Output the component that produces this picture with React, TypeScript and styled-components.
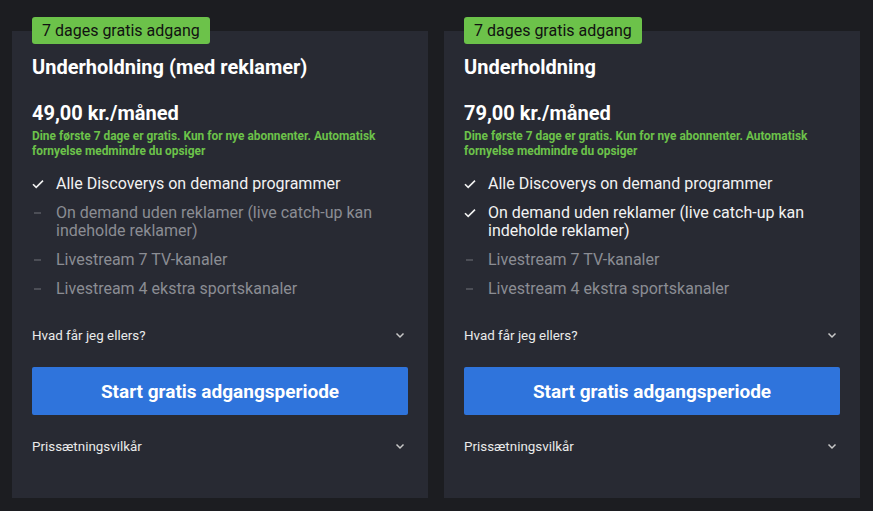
import React from 'react';
import styled, { createGlobalStyle } from 'styled-components';

const GlobalStyle = createGlobalStyle`
  html, body {
    margin: 0;
    padding: 0;
    background: #1c1d21;
  }
  body {
    font-family: Roboto, "Liberation Sans", Arial, sans-serif;
    -webkit-font-smoothing: antialiased;
  }
`;

const Page = styled.div`
  display: grid;
  grid-template-columns: 416px 416px;
  column-gap: 16px;
  padding: 31px 13px 13px 12px;
`;

const Card = styled.section`
  position: relative;
  height: 467px;
  box-sizing: border-box;
  padding: 24px 20px 0;
  background: #282a33;
  display: flex;
  flex-direction: column;
`;

const Badge = styled.div`
  position: absolute;
  top: -14px;
  left: 20px;
  height: 27px;
  padding: 0 10px;
  display: flex;
  align-items: center;
  background: #6cc24a;
  border-radius: 3px;
  color: #111;
  font-size: 16px;
`;

const Title = styled.h2`
  margin: 0;
  font-size: 20px;
  line-height: 24px;
  font-weight: 700;
  color: #fff;
`;

const Price = styled.div`
  margin-top: 22px;
  font-size: 20px;
  line-height: 24px;
  font-weight: 700;
  color: #fff;
`;

const Note = styled.p`
  margin: 4px 0 0;
  font-size: 11.9px;
  line-height: 15px;
  font-weight: 700;
  color: #6cc24a;
`;

const Features = styled.ul`
  list-style: none;
  margin: 16px 0 0;
  padding: 0;
  display: flex;
  flex-direction: column;
  gap: 11px;
`;

const Feature = styled.li<{ $on: boolean }>`
  display: flex;
  align-items: flex-start;
  gap: 12px;
  font-size: 16px;
  line-height: 18px;
  color: ${p => (p.$on ? '#f2f2f2' : '#8b8d93')};
`;

const Mark = styled.span`
  flex: none;
  width: 12px;
  height: 18px;
  display: flex;
  align-items: center;
  justify-content: center;
`;

const Row = styled.div<{ $top: number }>`
  margin-top: ${p => p.$top}px;
  height: 20px;
  display: flex;
  align-items: center;
  justify-content: space-between;
  font-size: 13.4px;
  color: #eaeaea;
`;

const CTA = styled.button`
  margin-top: 22px;
  height: 48px;
  width: 100%;
  border: 0;
  border-radius: 2px;
  background: #2f74dc;
  color: #fff;
  font-family: inherit;
  font-size: 19px;
  font-weight: 700;
  cursor: pointer;
`;

const Check = () => (
  <svg width="12" height="10" viewBox="0 0 12 10">
    <path d="M1 5.2 L4.2 8.4 L11 1.6" fill="none" stroke="#f2f2f2" strokeWidth="1.6" />
  </svg>
);

const Dash = () => (
  <svg width="12" height="10" viewBox="0 0 12 10">
    <path d="M2 5 H9" stroke="#5c5f66" strokeWidth="1.4" />
  </svg>
);

const Chevron = () => (
  <svg width="16" height="16" viewBox="0 0 16 16">
    <path d="M4.5 6.5 L8 10 L11.5 6.5" fill="none" stroke="#c8c8c8" strokeWidth="1.5" />
  </svg>
);

type Plan = {
  name: string;
  price: string;
  features: [string, boolean][];
};

const plans: Plan[] = [
  {
    name: 'Underholdning (med reklamer)',
    price: '49,00 kr./måned',
    features: [
      ['Alle Discoverys on demand programmer', true],
      ['On demand uden reklamer (live catch-up kan indeholde reklamer)', false],
      ['Livestream 7 TV-kanaler', false],
      ['Livestream 4 ekstra sportskanaler', false],
    ],
  },
  {
    name: 'Underholdning',
    price: '79,00 kr./måned',
    features: [
      ['Alle Discoverys on demand programmer', true],
      ['On demand uden reklamer (live catch-up kan indeholde reklamer)', true],
      ['Livestream 7 TV-kanaler', false],
      ['Livestream 4 ekstra sportskanaler', false],
    ],
  },
];

const PlanCard = ({ plan }: { plan: Plan }) => (
  <Card>
    <Badge>7 dages gratis adgang</Badge>
    <Title>{plan.name}</Title>
    <Price>{plan.price}</Price>
    <Note>
      Dine første 7 dage er gratis. Kun for nye abonnenter. Automatisk fornyelse medmindre du opsiger
    </Note>
    <Features>
      {plan.features.map(([text, on]) => (
        <Feature key={text} $on={on}>
          <Mark>{on ? <Check /> : <Dash />}</Mark>
          <span>{text}</span>
        </Feature>
      ))}
    </Features>
    <Row $top={27}>
      <span>Hvad får jeg ellers?</span>
      <Chevron />
    </Row>
    <CTA>Start gratis adgangsperiode</CTA>
    <Row $top={21}>
      <span>Prissætningsvilkår</span>
      <Chevron />
    </Row>
  </Card>
);

export default function App() {
  return (
    <>
      <GlobalStyle />
      <Page>
        {plans.map(p => (
          <PlanCard key={p.name} plan={p} />
        ))}
      </Page>
    </>
  );
}
